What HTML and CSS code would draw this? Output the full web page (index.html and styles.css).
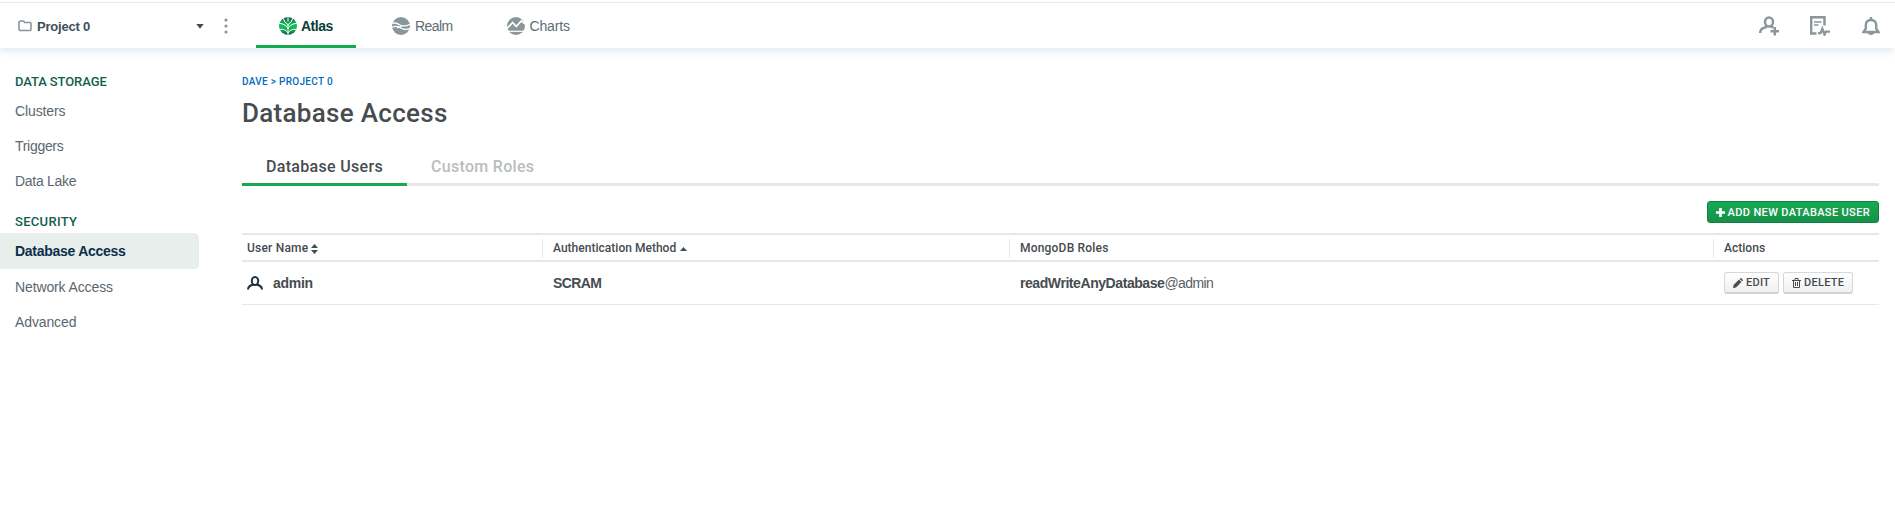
FILE: index.html
```html
<!DOCTYPE html>
<html lang="en">
<head>
<meta charset="utf-8">
<title>Database Access</title>
<link rel="stylesheet" href="styles.css">
</head>
<body>
<header class="topbar">
  <div class="project">
    <svg class="folder" width="14" height="12" viewBox="0 0 14 12"><path d="M1 2.200q0-1.200 1.200-1.200h2.600q.8 0 1.200.6l.7.9h5.100q1.200 0 1.200 1.200v5.600q0 1.200-1.200 1.200H2.200Q1 10.500 1 9.300z" fill="none" stroke="#89979b" stroke-width="1.600"/></svg>
    <span class="project-name">Project 0</span>
    <svg class="caret" width="8" height="5" viewBox="0 0 8 5"><path d="M.3 0h7.400L4 4.700z" fill="#3d4f58"/></svg>
    <svg class="dots" width="4" height="16" viewBox="0 0 4 16" fill="#89979b"><circle cx="2" cy="2" r="1.600"/><circle cx="2" cy="8" r="1.600"/><circle cx="2" cy="14" r="1.600"/></svg>
  </div>
  <nav class="products">
    <a class="product product-active">
      <svg width="18" height="18" viewBox="0 0 18 18"><defs><linearGradient id="leaf" x1="0" y1="0" x2="0" y2="1"><stop offset="0" stop-color="#116149"/><stop offset=".45" stop-color="#13c45a"/><stop offset=".7" stop-color="#13aa52"/><stop offset="1" stop-color="#116149"/></linearGradient></defs><circle cx="9" cy="9" r="9" fill="url(#leaf)"/><path d="M9 0v4.500M9 7v11M4.200 1.200Q5 5.400 9 7.800q4-2.400 4.800-6.600M0 6.200q6.500.6 9 5.300 2.500-4.700 9-5.300M.6 12.300q6-.6 8.400 3.700 2.400-4.300 8.400-3.700" fill="none" stroke="#fff" stroke-width="1"/></svg>
      <span>Atlas</span></a>
    <a class="product product-realm">
      <svg width="18" height="18" viewBox="0 0 18 18"><circle cx="9" cy="9" r="9" fill="#89979b"/><path d="M0 6.300c4-1.200 6 .8 8 1.700s6 1.500 10-.8M0 10.200c3-1.300 5-1.200 7-.2 3 1.800 6 3.600 11 1.600M5 10.500q3 .2 5-1.800" fill="none" stroke="#fff" stroke-width="1.300"/></svg>
      <span>Realm</span></a>
    <a class="product product-charts">
      <svg width="18" height="18" viewBox="0 0 18 18"><circle cx="9" cy="9" r="9" fill="#89979b"/><path d="M0 11.500l5.700-6 3.600 4 5.200-5.700L18 7" fill="none" stroke="#fff" stroke-width="1.700"/><path d="M0 14.300h18" stroke="#fff" stroke-width="1.200"/></svg>
      <span>Charts</span></a>
  </nav>
  <div class="tools">
    <svg width="20" height="20" viewBox="0 0 20 20" fill="none" stroke="#89979b" stroke-width="2.500"><ellipse cx="10" cy="6" rx="4" ry="4.500"/><path d="M1.200 17c0-4 2.500-5 6.800-6.300M12 10.500l2.200 1M15.800 11v8.500M11.500 15.200H20"/></svg>
    <svg class="tool-feed" width="20" height="20" viewBox="0 0 20 20" fill="none" stroke="#89979b"><path d="M6.500 17.500H1.200V1.200h13.300v8.300" stroke-width="2.400"/><path d="M4 6h7.500M4 9h4.500" stroke-width="1.500"/><path d="M8 17.200h2.500l1.800-4.500 2.200 6 1.300-3H20" stroke-width="2.300"/></svg>
    <svg width="18" height="18" viewBox="0 0 18 18"><path d="M9 0v3M1.500 15h15l-2.300-3.300V8Q14.200 3 9 3T3.800 8v3.700z" fill="none" stroke="#89979b" stroke-width="2.400"/><path d="M5.500 15h7q-.5 3-3.500 3t-3.500-3z" fill="#89979b"/></svg>
  </div>
</header>
<div class="layout">
  <aside class="sidebar">
    <h2 class="side-heading">DATA STORAGE</h2>
    <a class="side-link">Clusters</a>
    <a class="side-link side-link-tight">Triggers</a>
    <a class="side-link side-link-tight">Data Lake</a>
    <h2 class="side-heading side-heading-security">SECURITY</h2>
    <a class="side-link side-link-active">Database Access</a>
    <a class="side-link">Network Access</a>
    <a class="side-link">Advanced</a>
  </aside>
  <main class="content">
    <div class="breadcrumb">DAVE &gt; PROJECT 0</div>
    <h1 class="title">Database Access</h1>
    <div class="tabs"><a class="tab tab-active">Database Users</a><a class="tab">Custom Roles</a></div>
    <div class="actions-bar">
      <button class="btn btn-primary"><svg width="9" height="9" viewBox="0 0 9 9"><path d="M4.500 0v9M0 4.500h9" stroke="#fff" stroke-width="2.700"/></svg><span>ADD NEW DATABASE USER</span></button>
    </div>
    <div class="table">
      <div class="row head">
        <div class="cell"><span>User Name</span><svg width="7" height="10" viewBox="0 0 7 10" fill="#464c4f"><path d="M0 4h7L3.500 0zM0 6h7L3.500 10z"/></svg></div>
        <div class="cell"><span>Authentication Method</span><svg width="7" height="4" viewBox="0 0 7 4" fill="#464c4f"><path d="M0 4h7L3.500 0z"/></svg></div>
        <div class="cell cell-roles"><span>MongoDB Roles</span></div>
        <div class="cell"><span>Actions</span></div>
      </div>
      <div class="row body">
        <div class="cell user"><svg width="16" height="14" viewBox="0 0 16 14" fill="none" stroke="#21313c" stroke-width="2"><ellipse cx="8" cy="5" rx="3.200" ry="4"/><path d="M1 13.500c0-3.500 2.500-4.200 5.500-5M15 13.500c0-3.500-2.500-4.200-5.500-5"/></svg><b>admin</b></div>
        <div class="cell method"><b>SCRAM</b></div>
        <div class="cell role"><b>readWriteAnyDatabase</b><span>@admin</span></div>
        <div class="cell buttons">
          <button class="btn btn-edit"><svg width="10" height="10" viewBox="0 0 10 10" fill="#464c4f"><path d="M0 10l.6-3L6 1.600 8.400 4 3 9.400zM6.700.9l.6-.6q.5-.5 1 0L9.700 1.700q.5.500 0 1l-.6.6z"/></svg><span>EDIT</span></button>
          <button class="btn btn-delete"><svg width="9" height="10" viewBox="0 0 9 10" fill="none" stroke="#464c4f"><path d="M0 2.500h9M3 2.500V.5h3v2M1.500 2.500v7h6v-7M3.500 4v4M5.500 4v4"/></svg><span>DELETE</span></button>
        </div>
      </div>
    </div>
  </main>
</div>
</body>
</html>
```
FILE: styles.css
```css
* { box-sizing: border-box; }
body { margin: 0; height: 518px; overflow: hidden; background: #fff; color: #464c4f; font: 14px/20px "Liberation Sans", Arial, sans-serif; }
svg { display: block; flex: none; }
h1, h2 { margin: 0; }

.topbar { display: flex; height: 48px; background: linear-gradient(#fff 2px, #e3eeec 2px, #e3eeec 3px, #fff 3px); box-shadow: 0 3px 8px rgba(20, 80, 120, .13); }
.project { display: flex; align-items: center; width: 256px; padding: 4px 0 0 18px; }
.project-name { width: 160px; margin-left: 5px; padding-top: 1px; color: #3d4f58; font-size: 13px; font-weight: bold; letter-spacing: -.22px; }
.caret { margin-left: -1px; }
.dots { margin-left: 20px; }
.products { display: flex; }
.product { display: flex; align-items: center; gap: 5px; height: 48px; padding: 4px 22px 0 23px; color: #5d6c74; letter-spacing: -.15px; }
.product-active { gap: 4px; width: 100px; margin-right: 13px; padding-top: 7px; color: #0b3b35; font-weight: bold; letter-spacing: -.5px; border-bottom: 3px solid #13aa52; border-radius: 3px 3px 0 0; }
.product-realm { padding-right: 32px; letter-spacing: -.6px; }
.product-charts { gap: 4px; }
.tools { display: flex; align-items: center; gap: 31px; margin-left: auto; padding: 4px 15px 0 0; }
.tool-feed { margin-right: 1px; }

.layout { display: flex; }
.sidebar { width: 199px; padding-top: 24px; }
.side-heading { height: 20.500px; padding-left: 15px; color: #116149; font: 500 13px/19px Roboto, sans-serif; letter-spacing: -.1px; }
.side-heading-security { margin-top: 13.500px; letter-spacing: .3px; }
.side-link { display: flex; align-items: center; height: 35.400px; padding: 1px 0 0 15px; color: #5b6770; letter-spacing: -.12px; }
.side-link-tight { letter-spacing: -.3px; }
.side-link-active { height: 36px; border-radius: 0 5px 5px 0; background: #e7eeec; color: #0b2f4a; font-weight: bold; letter-spacing: -.27px; }

.content { flex: 1; padding: 25px 16px 0 43px; }
.breadcrumb { color: #006cbc; font: 500 10px/18px Roboto, sans-serif; letter-spacing: .3px; }
.title { margin-top: 4px; font: 500 26px/36px Roboto, sans-serif; letter-spacing: .3px; }
.tabs { display: flex; height: 43px; margin-top: 12px; border-bottom: 3px solid #e7e7e7; }
.tab { height: 43px; padding: 12px 24px 0; color: #babdbe; font: 500 16px/24px Roboto, sans-serif; letter-spacing: .31px; }
.tab-active { border-bottom: 3px solid #13aa52; color: #464c4f; }
.actions-bar { display: flex; justify-content: flex-end; padding: 15px 0 10px; }

.btn { display: flex; align-items: center; height: 22px; padding: 1px 8px 0; gap: 3px; border: 1px solid #d5d8d8; border-bottom: 2px solid #d0d4d4; border-radius: 3px; background: linear-gradient(#fff, #f0f0f0); color: #464c4f; font: 500 11px/18px Roboto, sans-serif; }
.btn-primary { border: 1px solid #118044; background: linear-gradient(#17aa53, #169148); color: #fff; letter-spacing: .36px; }
.btn-edit { width: 55px; letter-spacing: .25px; }
.btn-delete { width: 70px; letter-spacing: .3px; }

.row { display: grid; grid-template-columns: 300px 467px 704px 1fr; }
.head { height: 29px; padding: 4px 0; border-top: 2px solid #e7e7e7; border-bottom: 2px solid #e7e7e7; font: 500 12px/19px Roboto, sans-serif; letter-spacing: .02px; }
.cell { display: flex; align-items: center; padding-left: 11px; }
.cell:first-child { padding-left: 5px; }
.head .cell { gap: 4px; }
.head .cell + .cell { padding-left: 10px; border-left: 1px solid #e7e7e7; }
.head .cell:first-child, .cell-roles { letter-spacing: .2px; }
.head .cell:first-child { gap: 3px; }
.body { height: 43px; border-bottom: 1px solid #e7e7e7; }
.user { gap: 10px; letter-spacing: -.3px; }
.method { letter-spacing: -.6px; }
.role b { letter-spacing: -.43px; }
.role span { letter-spacing: -.6px; color: #5a6063; }
.buttons { gap: 4px; }
```
